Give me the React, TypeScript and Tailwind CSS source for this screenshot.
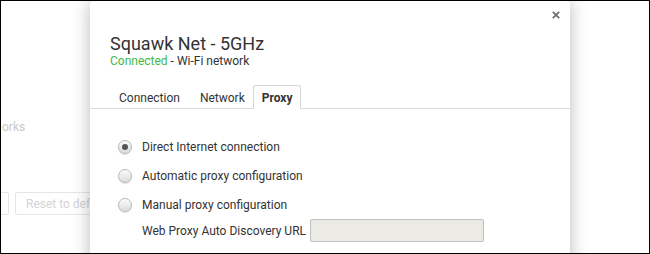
import React from "react";

function Radio({ checked }: { checked?: boolean }) {
  return (
    <span className="flex h-[14px] w-[14px] shrink-0 items-center justify-center rounded-full border border-[#b9b9b9] bg-gradient-to-b from-[#fbfbfb] to-[#dcdcdc] shadow-[0_1px_1px_rgba(0,0,0,0.12)]">
      {checked && <span className="h-[6px] w-[6px] rounded-full bg-[#555]" />}
    </span>
  );
}

export default function App() {
  const font = { fontFamily: "Roboto, 'Liberation Sans', sans-serif" };
  return (
    <div
      className="relative h-[254px] w-[650px] overflow-hidden border border-black bg-white text-[12px] text-[#333]"
      style={font}
    >
      {/* background page */}
      <div className="flex flex-col pt-[118px]">
        <div className="h-[16px] pl-[1px] leading-[16px] text-[#c9c9c9]">orks</div>
        <div className="mt-[57px] flex gap-[6px]">
          <div className="-ml-[32px] h-[23px] w-[40px] rounded-[2px] border border-[#e6e6e6]" />
          <div className="flex h-[23px] items-center whitespace-nowrap rounded-[2px] border border-[#e6e6e6] px-[10px] text-[#d4d4d4]">
            Reset to defaults
          </div>
        </div>
      </div>

      {/* dialog */}
      <div className="absolute left-[89px] top-0 h-[270px] w-[480px] rounded-t-[3px] bg-white shadow-[0_0_18px_rgba(0,0,0,0.28)]">
        <button className="absolute right-[10px] top-[10px] h-[8px] w-[8px]" aria-label="close">
          <svg width="8" height="8" viewBox="0 0 8 8">
            <path d="M0.8 0.8 L7.2 7.2 M7.2 0.8 L0.8 7.2" stroke="#6f6f6f" strokeWidth="1.8" />
          </svg>
        </button>
        <div className="pl-[20px] pt-[33px]">
          <div className="text-[18px] leading-[19px] text-[#333]">Squawk Net - 5GHz</div>
          <div className="leading-[16px]">
            <span className="text-[#3fb84a]">Connected</span> - Wi-Fi network
          </div>
        </div>
        <div className="mt-[16px] flex items-end border-b border-[#dcdcdc] pl-[19px]">
          <div className="border border-b-0 border-transparent px-[9px] pb-[2px] pt-[4px] leading-[16px]">Connection</div>
          <div className="border border-b-0 border-transparent pl-[9px] pr-[7px] pb-[2px] pt-[4px] leading-[16px]">Network</div>
          <div className="-mb-px rounded-t-[3px] border border-b-0 border-[#d6d6d6] bg-white px-[8px] pb-[3px] pt-[4px] font-bold leading-[16px]">
            Proxy
          </div>
        </div>
        <div className="flex flex-col pl-[28px] pt-[23px]">
          <div className="flex h-[29px] items-center gap-[10px]">
            <Radio checked />
            <span>Direct Internet connection</span>
          </div>
          <div className="flex h-[29px] items-center gap-[10px]">
            <Radio />
            <span>Automatic proxy configuration</span>
          </div>
          <div className="flex h-[29px] items-center gap-[10px]">
            <Radio />
            <span>Manual proxy configuration</span>
          </div>
          <div className="flex h-[23px] items-center gap-[4px] pl-[24px]">
            <span>Web Proxy Auto Discovery URL</span>
            <div className="h-[23px] w-[174px] rounded-[2px] border border-[#c0c0c0] bg-[#ebeae4]" />
          </div>
        </div>
      </div>
    </div>
  );
}
